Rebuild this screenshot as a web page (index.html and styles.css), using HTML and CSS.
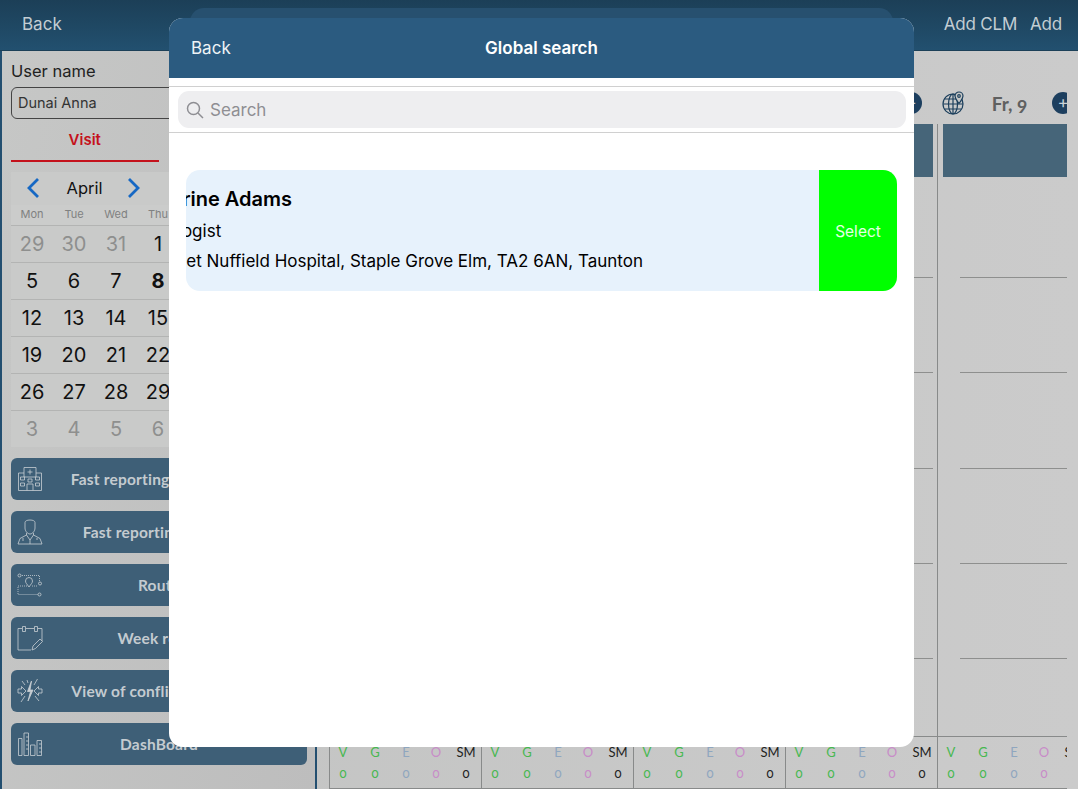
FILE: index.html
```html
<!DOCTYPE html>
<html lang="en">
  <head>
    <meta charset="UTF-8">
    <title>Global search</title>
    <link rel="stylesheet" href="styles.css">
  </head>
  <body>
    <div class="topbar">
      <span>Back</span>
      <div class="topbar-right">
        <span>Add CLM</span>
        <span>Add</span>
      </div>
    </div>

    <div class="main">
      <div class="side">
        <div class="user-label">User name</div>
        <div class="user-input">Dunai Anna</div>
        <div class="tabs">
          <div class="tab tab-on">Visit</div>
          <div class="tab">Week</div>
        </div>

        <div class="calendar">
          <div class="month">
            <svg class="chev" viewBox="0 0 16 22"><path d="M13 2 4 11l9 9"/></svg>
            <span>April</span>
            <svg class="chev" viewBox="0 0 16 22"><path d="M3 2l9 9-9 9"/></svg>
          </div>
          <div class="dow">
            <span>Mon</span><span>Tue</span><span>Wed</span><span>Thu</span><span>Fri</span><span>Sat</span><span>Sun</span>
          </div>
          <div class="week">
            <span class="off">29</span><span class="off">30</span><span class="off">31</span><span>1</span><span>2</span><span>3</span><span>4</span>
          </div>
          <div class="week">
            <span>5</span><span>6</span><span>7</span><span class="today">8</span><span>9</span><span>10</span><span>11</span>
          </div>
          <div class="week">
            <span>12</span><span>13</span><span>14</span><span>15</span><span>16</span><span>17</span><span>18</span>
          </div>
          <div class="week">
            <span>19</span><span>20</span><span>21</span><span>22</span><span>23</span><span>24</span><span>25</span>
          </div>
          <div class="week">
            <span>26</span><span>27</span><span>28</span><span>29</span><span>30</span><span class="off">1</span><span class="off">2</span>
          </div>
          <div class="week">
            <span class="off">3</span><span class="off">4</span><span class="off">5</span><span class="off">6</span><span class="off">7</span><span class="off">8</span><span class="off">9</span>
          </div>
        </div>

        <div class="side-buttons">
          <div class="side-btn">
            <svg class="btn-icon" viewBox="0 0 26 26">
              <path d="M7 7H1.500v17.500h23V7H19M7 11V1.500h12V11H7zM13 3.500v5M10.500 6h5M10 24.500V18h6v6.500"/>
              <path d="M3.500 11h4v3h-4zM11 13h4v3h-4zM18.500 11h4v3h-4zM3.500 17h4v3h-4zM18.500 17h4v3h-4z"/>
            </svg>
            <span>Fast reporting Institution</span>
          </div>
          <div class="side-btn">
            <svg class="btn-icon" viewBox="0 0 26 26">
              <path d="M8 3.500C8 2 10 1 13 1s5 1 5 2.500V9c0 3-2.500 6-5 6s-5-3-5-6V3.500z"/>
              <path d="M9.500 14v2L3 19.500 1 25h24l-2-5.500-6.500-3.500v-2M9.500 16l3.500 5 3.500-5M13 21v4M6 19v3M20 19v2"/>
            </svg>
            <span>Fast reporting Doctor</span>
          </div>
          <div class="side-btn">
            <svg class="btn-icon" viewBox="0 0 26 26">
              <path stroke-dasharray="1 1" d="M5 3.500h17.500V10M10 14H1v8.500h20M15 14h5"/>
              <circle cx="2.500" cy="3.500" r="1.500"/>
              <circle cx="22.500" cy="22.500" r="1.500"/>
              <circle cx="23" cy="11.500" r="1.500"/>
              <path d="M12 15c-2-3-3.500-4-3.500-6a3.500 3.500 0 0 1 7 0c0 2-1.500 3-3.500 6z"/>
            </svg>
            <span>Route</span>
          </div>
          <div class="side-btn">
            <svg class="btn-icon" viewBox="0 0 26 26">
              <path d="M14 25H1V3.500h4M9 3.500h8M21 3.500h4V16"/>
              <path d="M5.500 1.500h3v5h-3zM17.500 1.500h3v5h-3z"/>
              <path d="M15 25l1-4 7-7 2.500 2.500-7 7-3.500 1.500z"/>
            </svg>
            <span>Week route</span>
          </div>
          <div class="side-btn">
            <svg class="btn-icon" viewBox="0 0 26 26">
              <path d="M14.500 3 10.500 13.500h3L11 23l5-11h-3l1.500-9z" fill="#c8ced3"/>
              <path d="M1 11h3.500V8.500L9 13l-4.500 4.500V15H1v-4zM25 11h-3.500V8.500L17 13l4.500 4.500V15H25v-4z"/>
              <path d="M5 3l3 4M20.500 1 17 7M4 24l4-6M22 23l-4-5M10 2l1 3"/>
            </svg>
            <span>View of conflicts in visits</span>
          </div>
          <div class="side-btn">
            <svg class="btn-icon" viewBox="0 0 26 26">
              <path d="M1.500 7.500h3.500v17H1.500zM7 2h4.500v22.500H7zM13.500 14H18v10.500h-4.500zM20 9.500h4.500v15H20z"/>
              <path d="M9 6h2.500M9 10h2.500M9 14h2.500M9 18h2.500M22 13h2.500M22 17h2.500M22 21h2.500"/>
            </svg>
            <span>DashBoard</span>
          </div>
        </div>
      </div>

      <div class="content">
        <div class="days">
          <div class="day">
            <div class="day-head">
              <svg class="globe" viewBox="0 0 24 24"><circle cx="11" cy="13" r="10"/><ellipse cx="11" cy="13" rx="4.500" ry="10"/><path d="M11 3v20M1 13h20M2.500 8h17M2.500 18h17"/></svg>
              <span class="day-title">Mo, 5</span>
              <span class="plus">+</span>
            </div>
            <div class="day-body">
              <div class="day-block"></div>
              <div class="slot"></div><div class="slot"></div><div class="slot"></div><div class="slot"></div><div class="slot"></div>
              <div class="stats">
                <span class="v">V</span><span class="g">G</span><span class="e">E</span><span class="o">O</span><span>SM</span>
                <span class="v">0</span><span class="g">0</span><span class="e">0</span><span class="o">0</span><span>0</span>
              </div>
            </div>
          </div>
          <div class="day">
            <div class="day-head">
              <svg class="globe" viewBox="0 0 24 24"><circle cx="11" cy="13" r="10"/><ellipse cx="11" cy="13" rx="4.500" ry="10"/><path d="M11 3v20M1 13h20M2.500 8h17M2.500 18h17"/></svg>
              <span class="day-title">Tu, 6</span>
              <span class="plus">+</span>
            </div>
            <div class="day-body">
              <div class="day-block"></div>
              <div class="slot"></div><div class="slot"></div><div class="slot"></div><div class="slot"></div><div class="slot"></div>
              <div class="stats">
                <span class="v">V</span><span class="g">G</span><span class="e">E</span><span class="o">O</span><span>SM</span>
                <span class="v">0</span><span class="g">0</span><span class="e">0</span><span class="o">0</span><span>0</span>
              </div>
            </div>
          </div>
          <div class="day">
            <div class="day-head">
              <svg class="globe" viewBox="0 0 24 24"><circle cx="11" cy="13" r="10"/><ellipse cx="11" cy="13" rx="4.500" ry="10"/><path d="M11 3v20M1 13h20M2.500 8h17M2.500 18h17"/></svg>
              <span class="day-title">We, 7</span>
              <span class="plus">+</span>
            </div>
            <div class="day-body">
              <div class="day-block"></div>
              <div class="slot"></div><div class="slot"></div><div class="slot"></div><div class="slot"></div><div class="slot"></div>
              <div class="stats">
                <span class="v">V</span><span class="g">G</span><span class="e">E</span><span class="o">O</span><span>SM</span>
                <span class="v">0</span><span class="g">0</span><span class="e">0</span><span class="o">0</span><span>0</span>
              </div>
            </div>
          </div>
          <div class="day">
            <div class="day-head">
              <svg class="globe" viewBox="0 0 24 24"><circle cx="11" cy="13" r="10"/><ellipse cx="11" cy="13" rx="4.500" ry="10"/><path d="M11 3v20M1 13h20M2.500 8h17M2.500 18h17"/></svg>
              <span class="day-title">Th, 8</span>
              <span class="plus">+</span>
            </div>
            <div class="day-body">
              <div class="day-block"></div>
              <div class="slot"></div><div class="slot"></div><div class="slot"></div><div class="slot"></div><div class="slot"></div>
              <div class="stats">
                <span class="v">V</span><span class="g">G</span><span class="e">E</span><span class="o">O</span><span>SM</span>
                <span class="v">0</span><span class="g">0</span><span class="e">0</span><span class="o">0</span><span>0</span>
              </div>
            </div>
          </div>
          <div class="day">
            <div class="day-head">
              <svg class="globe" viewBox="0 0 24 24">
                <circle cx="11" cy="13" r="10"/><ellipse cx="11" cy="13" rx="4.500" ry="10"/><path d="M11 3v20M1 13h20M2.500 8h17M2.500 18h17"/>
                <path d="M17 12.500c-2-3-4-5-4-7.500a4 4 0 0 1 8 0c0 2.500-2 4.500-4 7.500z" fill="#c6c7c6"/>
                <circle cx="17" cy="5" r="1.300"/>
              </svg>
              <span class="day-title">Fr, 9</span>
              <span class="plus">+</span>
            </div>
            <div class="day-body">
              <div class="day-block"></div>
              <div class="slot"></div><div class="slot"></div><div class="slot"></div><div class="slot"></div><div class="slot"></div>
              <div class="stats">
                <span class="v">V</span><span class="g">G</span><span class="e">E</span><span class="o">O</span><span>SM</span>
                <span class="v">0</span><span class="g">0</span><span class="e">0</span><span class="o">0</span><span>0</span>
              </div>
            </div>
          </div>
        </div>
      </div>
    </div>

    <!-- sheet behind the search sheet, only its top edge shows -->
    <div class="sheet-back"></div>

    <div class="sheet">
      <div class="sheet-head">
        <span class="sheet-back-link">Back</span>
        <span class="sheet-title">Global search</span>
      </div>
      <div class="search-wrap">
        <div class="search">
          <svg class="search-icon" viewBox="0 0 18 18"><circle cx="7.500" cy="7.500" r="6"/><path d="M12 12l5 5"/></svg>
          <span>Search</span>
        </div>
      </div>
      <div class="results">
        <div class="result">
          <div class="result-text">
            <div class="result-inner">
              <div class="result-name">Catherine Adams</div>
              <div class="result-line">Cardiologist</div>
              <div class="result-line">Somerset Nuffield Hospital, Staple Grove Elm, TA2 6AN, Taunton</div>
            </div>
          </div>
          <div class="result-select">Select</div>
        </div>
      </div>
    </div>
  </body>
</html>
```

FILE: styles.css
```css
* {box-sizing: border-box;}

html, body {
  margin: 0;
  height: 789px;
  overflow: hidden;
}

body {
  position: relative;
  font-family: Inter, "Liberation Sans", sans-serif;
  background: linear-gradient(90deg, #c2c3c2, #cbcbcb);
  color: #111;
}

.topbar {
  height: 51px;
  padding: 0 16px 3px 22px;
  display: flex;
  align-items: center;
  justify-content: space-between;
  font-size: 17px;
  color: #c3cdd3;
  background: linear-gradient(#1c3f57, #22506f);
  border-bottom: 1px solid #1c4058;
}
.topbar-right {
  display: flex;
  gap: 13px;
  letter-spacing: -.2px;
}

.main {
  display: flex;
  height: 738px;
}

.side {
  width: 317px;
  flex: none;
  padding: 10px 9px 0 9px;
  border-left: 2px solid #234f70;
  border-right: 2px solid #234f70;
  background: linear-gradient(100deg, #c6c7c6, #bdbdbd);
}
.user-label {
  font-size: 16.500px;
  line-height: 20px;
  color: #222;
}
.user-input {
  margin-top: 6px;
  height: 32px;
  padding-left: 6px;
  line-height: 30px;
  font-size: 14.500px;
  color: #333;
  border: 1px solid #444;
  border-radius: 6px;
}
.tabs {
  display: flex;
  height: 43px;
}
.tab {
  width: 148px;
  padding-top: 11px;
  text-align: center;
  font-size: 15px;
  font-weight: 600;
  color: #333;
}
.tab-on {
  color: #c4121c;
  border-bottom: 2px solid #c4121c;
}

.calendar {
  margin-top: 10px;
  width: 296px;
  background: #c9cac9;
}
.month {
  width: 148px;
  height: 33px;
  padding: 0 17px 2px 14px;
  display: flex;
  align-items: center;
  justify-content: space-between;
  font-size: 16.500px;
  color: #111;
}
.month span {
  padding-left: 2px;
}
.chev {
  width: 16px;
  height: 22px;
  fill: none;
  stroke: #1668c4;
  stroke-width: 2.800;
}
.dow, .week {
  display: grid;
  grid-template-columns: repeat(7, 42px);
  text-align: center;
}
.dow {
  height: 20px;
  line-height: 19px;
  font-size: 11px;
  color: #808181;
  background: #cbcccb;
}
.week {
  height: 37px;
  line-height: 36px;
  font-size: 20px;
  color: #111;
  border-top: 1px solid #b3b4b3;
}
.off {color: #8e8f8e;}
.today {font-weight: 700;}

.side-buttons {
  margin-top: 11px;
  width: 296px;
  display: flex;
  flex-direction: column;
  gap: 11px;
}
.side-btn {
  height: 42px;
  padding: 0 6px;
  display: grid;
  grid-template-columns: 26px 1fr 26px;
  align-items: center;
  background: #3e5f77;
  border-radius: 6px;
  color: #c4cbd0;
  font-family: Lato, "Liberation Sans", sans-serif;
  font-size: 15.500px;
  font-weight: 700;
  letter-spacing: .2px;
}
.side-btn span {
  text-align: center;
  white-space: nowrap;
}
.btn-icon {
  width: 26px;
  height: 26px;
  fill: none;
  stroke: #c8ced3;
  stroke-width: .8;
}

.content {
  flex: 1;
  min-width: 0;
  margin: 0 11px 0 12px;
  overflow: hidden;
}
.days {
  display: flex;
  height: 738px;
}
.day {
  width: 152px;
  flex: none;
  display: flex;
  flex-direction: column;
}
.day-head {
  height: 73px;
  padding: 37px 0 6px 5px;
  display: flex;
  align-items: center;
}
.globe {
  width: 24px;
  height: 24px;
  flex: none;
  fill: none;
  stroke: #1c3f5c;
  stroke-width: 1.200;
}
.day-title {
  width: 86px;
  padding-left: 1px;
  text-align: center;
  font-family: Lato, "Liberation Sans", sans-serif;
  font-size: 19px;
  font-weight: 700;
  color: #5f6060;
  font-variant-numeric: oldstyle-nums;
}
.plus {
  width: 22px;
  height: 22px;
  flex: none;
  text-align: center;
  line-height: 20px;
  font-size: 17px;
  color: #c9d2d8;
  background: #1d3f5f;
  border-radius: 50%;
}
.day-body {
  flex: 1;
  display: flex;
  flex-direction: column;
  border-left: 1px solid #888a8a;
}
.day-block {
  height: 53px;
  flex: none;
  margin: 0 4px 0 5px;
  background: #466579;
}
.slot {
  height: 95.250px;
  flex: none;
  margin: 0 4px 0 22px;
  border-bottom: 1px solid #8e8f8e;
}
.day-block + .slot {
  height: 101px;
}
.stats {
  margin-top: auto;
  height: 53px;
  display: grid;
  grid-template-columns: 26px 38px 24px 36px 24px;
  align-content: center;
  row-gap: 7px;
  text-align: center;
  font-family: Lato, "Liberation Sans", sans-serif;
  font-size: 13px;
  line-height: 14px;
  color: #222;
  font-variant-numeric: oldstyle-nums;
  border-top: 1px solid #888a8a;
  border-bottom: 1px solid #888a8a;
}
.stats .v, .stats .g {color: #46b850;}
.stats .e {color: #8fa6bf;}
.stats .o {color: #c88cc8;}

.sheet-back {
  position: absolute;
  left: 190px;
  top: 8px;
  width: 703px;
  height: 40px;
  background: #27506f;
  border-radius: 14px;
}
.sheet {
  position: absolute;
  left: 169px;
  top: 18px;
  width: 745px;
  height: 729px;
  background: #fff;
  border-radius: 14px;
  overflow: hidden;
}
.sheet-head {
  height: 60px;
  position: relative;
  display: flex;
  align-items: center;
  justify-content: center;
  color: #fff;
  font-size: 17px;
  background: #2b5b80;
}
.sheet-back-link {
  position: absolute;
  left: 22px;
  color: #eef3f6;
}
.sheet-title {
  font-size: 17px;
  font-weight: 600;
}
.search-wrap {
  margin-top: 8px;
  height: 47px;
  padding: 4px 8px 0 9px;
  border-top: 1px solid #d0d0d0;
  border-bottom: 1px solid #d0d0d0;
}
.search {
  height: 37px;
  padding-left: 8px;
  display: flex;
  align-items: center;
  gap: 6px;
  font-size: 17px;
  color: #8e8e93;
  background: #eeeef0;
  border-radius: 11px;
}
.search-icon {
  width: 18px;
  height: 18px;
  fill: none;
  stroke: #8e8e93;
  stroke-width: 1.500;
}
.results {
  padding: 37px 17px 0;
}
.result {
  height: 121px;
  display: flex;
  background: #e7f2fc;
  border-radius: 14px;
  overflow: hidden;
}
.result-text {
  flex: 1;
  min-width: 0;
  overflow: hidden;
  padding-top: 17px;
}
.result-inner {
  margin-left: -61px;
  white-space: nowrap;
  color: #000;
}
.result-name {
  font-size: 20px;
  font-weight: 600;
  line-height: 24px;
  margin-bottom: 9px;
}
.result-line {
  margin-bottom: 8px;
  font-size: 17px;
  line-height: 22px;
}
.result-select {
  width: 78px;
  flex: none;
  padding-top: 1px;
  display: flex;
  align-items: center;
  justify-content: center;
  font-size: 15.500px;
  color: #e6ffe6;
  background: #00ff00;
}
```
